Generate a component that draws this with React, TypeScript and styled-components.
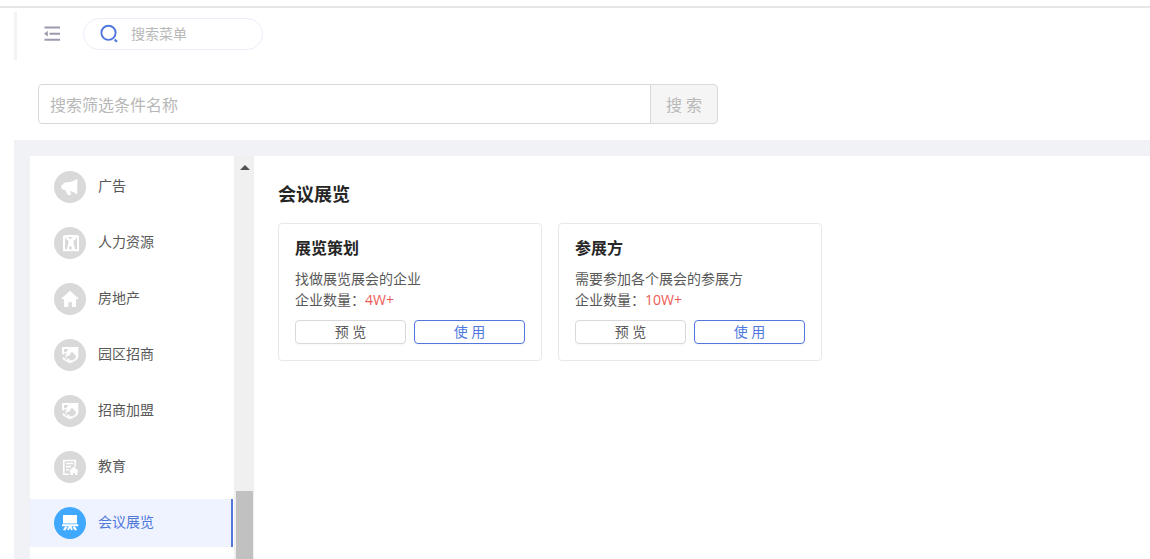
import React from "react";
import styled, { createGlobalStyle } from "styled-components";

const Global = createGlobalStyle`
  * { box-sizing: border-box; }
  body {
    margin: 0;
    background: #fff;
    color: #595959;
    font-family: "Open Sans", "Noto Sans CJK SC", sans-serif;
    font-size: 14px;
    overflow: hidden;
  }
  button, input { font-family: inherit; }
  h1, h2, p, ul { margin: 0; padding: 0; }
`;

const Page = styled.div`
  display: flex;
  flex-direction: column;
  height: 100vh;
  padding: 6px 0 0 14px;
`;

const TopRule = styled.div`
  height: 2px;
  margin-left: -14px;
  flex: none;
  background: #e6e6e6;
`;

const Header = styled.header`
  display: flex;
  align-items: center;
  gap: 22px;
  flex: none;
  height: 48px;
  margin-top: 4px;
  padding: 0 24px 4px 26px;
  border-left: 3px solid #f3f3f3;
`;

const IconButton = styled.button`
  display: flex;
  padding: 0;
  border: 0;
  background: none;
  color: #9c9aad;
  cursor: pointer;
`;

const MenuSearch = styled.label`
  display: flex;
  align-items: center;
  gap: 12px;
  width: 180px;
  height: 32px;
  padding: 0 16px;
  border: 1px solid #ebeef8;
  border-radius: 16px;
  svg { flex: none; }
`;

const MenuInput = styled.input`
  min-width: 0;
  flex: 1;
  padding: 0 0 2px;
  border: 0;
  outline: 0;
  background: none;
  font-size: 14px;
  &::placeholder { color: #b8b8b8; }
`;

const FilterForm = styled.form`
  display: flex;
  flex: none;
  padding: 24px 24px 16px;
`;

const FilterInput = styled.input`
  width: 613px;
  min-width: 0;
  height: 40px;
  padding: 2px 11px 0;
  border: 1px solid #d9d9d9;
  border-radius: 4px 0 0 4px;
  outline: 0;
  font-size: 16px;
  &::placeholder { color: #b8b8b8; }
`;

const FilterButton = styled.button`
  width: 68px;
  height: 40px;
  margin-left: -1px;
  padding: 0;
  border: 1px solid #d9d9d9;
  border-radius: 0 4px 4px 0;
  background: #f5f5f5;
  color: #b8b8b8;
  font-size: 16px;
`;

const Body = styled.div`
  display: flex;
  flex: 1;
  min-height: 0;
  padding: 16px 0 0 16px;
  background: #f0f2f5;
`;

const Sidebar = styled.nav`
  width: 204px;
  flex: none;
  padding: 7px 1px 0 0;
  background: #fff;
  overflow: hidden;
`;

const NavList = styled.ul`
  display: flex;
  flex-direction: column;
  gap: 8px;
  list-style: none;
`;

const NavLink = styled.a<{ $active?: boolean }>`
  display: flex;
  align-items: center;
  gap: 12px;
  height: 48px;
  padding-left: 24px;
  border-right: 2px solid ${(p) => (p.$active ? "#5078dc" : "transparent")};
  background: ${(p) => (p.$active ? "#eef3ff" : "transparent")};
  color: ${(p) => (p.$active ? "#5078dc" : "#595959")};
  text-decoration: none;
`;

const NavText = styled.span`
  padding-bottom: 2px;
  line-height: 20px;
`;

const Badge = styled.span<{ $active?: boolean }>`
  display: flex;
  width: 32px;
  height: 32px;
  border-radius: 50%;
  background: ${(p) => (p.$active ? "#40a9ff" : "#d9d9d9")};
  color: ${(p) => (p.$active ? "#40a9ff" : "#d9d9d9")};
`;

const Track = styled.div`
  display: flex;
  flex-direction: column;
  width: 20px;
  flex: none;
  padding: 9px 1px 0 2px;
  background: #f0f0f0;
`;

const ArrowUp = styled.div`
  align-self: center;
  border: 5px solid transparent;
  border-top: 0;
  border-bottom-color: #505050;
`;

const Thumb = styled.div`
  flex: 1;
  margin-top: 321px;
  background: #c1c1c1;
`;

const Main = styled.main`
  flex: 1;
  min-width: 0;
  padding: 24px;
  background: #fff;
`;

const Title = styled.h1`
  color: #262626;
  font-size: 18px;
  line-height: 28px;
`;

const Cards = styled.div`
  display: flex;
  flex-wrap: wrap;
  gap: 16px;
  margin-top: 15px;
`;

const Card = styled.article`
  width: 264px;
  padding: 12px 16px 16px;
  border: 1px solid #e8e8e8;
  border-radius: 4px;
`;

const CardTitle = styled.h2`
  margin-bottom: 8px;
  color: #262626;
  font-size: 16px;
  line-height: 24px;
`;

const Line = styled.p`
  line-height: 21px;
`;

const Count = styled.span`
  color: #ec5b56;
`;

const Actions = styled.div`
  display: flex;
  gap: 8px;
  margin-top: 10px;
`;

const Button = styled.button<{ $primary?: boolean }>`
  flex: 1;
  height: 24px;
  padding: 0 0 1px;
  border: 1px solid ${(p) => (p.$primary ? "#5078dc" : "#d9d9d9")};
  border-radius: 4px;
  background: #fff;
  color: ${(p) => (p.$primary ? "#5078dc" : "#595959")};
  font-size: 14px;
  line-height: 20px;
  box-shadow: 0 2px 0 rgba(0, 0, 0, 0.02);
  cursor: pointer;
`;

const Glyph = ({ children }: { children: React.ReactNode }) => (
  <svg width="32" height="32" viewBox="0 0 32 32" fill="#fff" aria-hidden="true">
    {children}
  </svg>
);

const Horn = () => (
  <Glyph>
    <path d="M23.300 7.800v15.800c-2.400-1.900-4.600-3-7.400-3.500l1.300 4h-3.300l-2.800-5.200c-1 .2-1.700 0-2.100-.6-1.400-.2-1.900-1.200-1.700-2.500-.4-1 .1-1.900 1.200-2 .7-1.600 2.200-2.500 4.300-2.600 4-.1 7.400-1.100 10.500-3.400z" />
  </Glyph>
);

const Suit = () => (
  <Glyph>
    <path d="M10.500 8h13v.8H25v15.500H9V8.800h1.500z" />
    <path fill="currentColor" d="M13.800 10h5l-2.500 2.200zM11 10.800h1.200v1.700l2.500 1.300-.5 3.200-1.200 5.300h-2zM23 10.800h-1.200v1.700l-2.500 1.300.5 3.200 1.200 5.300h2zM15.200 20.200l1.200-1.500 1.200 1.500v2.200h-2.400z" />
  </Glyph>
);

const House = () => (
  <Glyph>
    <path d="M16 7.700l8.600 7.700-.6.900h-2V24h-4v-4.700h-3.600V24H10v-7.700H8l-.6-.9z" />
  </Glyph>
);

const Handshake = () => (
  <Glyph>
    <path d="M8 8h16.300v9.500c0 3.300-4.600 5.300-8.100 6.800C12.700 22.800 8 20.800 8 17.500z" />
    <path fill="currentColor" d="M10 10h4.200l-1.500 2.500-2.700 1zM7.500 15.200h2.500l2-1.500 1 .6-1.700 2 .8 1.500-1.800.8H7.500z" />
    <path fill="currentColor" d="M17 13.300l2.200.2 3.200 4.300-1 1.200-.6 1.500-1.400-.2-.7 1.400-1.400-.7-1 .6-1.400-1.800-1.900.3-1.400-1.800 3-2 .8.600z" />
    <path stroke="currentColor" strokeWidth="1" fill="none" d="M10 18l3.500 3.200" />
  </Glyph>
);

const Report = () => (
  <Glyph>
    <path fill="none" stroke="#fff" strokeWidth="1.600" d="M15 23.200H9.800V9.500h11.400v6M12 12.500h7M12 15.600h5M12 18.700h3" />
    <path d="M19.800 15.600l4.700 4.300-.4.700h-.7v3.400h-2.500v-2h-2v2h-2.500v-3.400h-.8l-.4-.7z" />
  </Glyph>
);

const Board = () => (
  <Glyph>
    <path d="M9 8h14v8.500H9zM8 17.300h16.300v2H8zM11.200 19.300l2.300.9-2.300 3.300-2.200-.4zM20.900 19.300l-2.300.9 2.300 3.300 2.200-.4zM14.700 19.300h2.700l1.500 3.500-1.700.4-1.200-2.300-1.200 2.300-1.700-.4z" />
  </Glyph>
);

const categories = [
  { name: "广告", Icon: Horn },
  { name: "人力资源", Icon: Suit },
  { name: "房地产", Icon: House },
  { name: "园区招商", Icon: Handshake },
  { name: "招商加盟", Icon: Handshake },
  { name: "教育", Icon: Report },
  { name: "会议展览", Icon: Board, active: true },
];

const templates = [
  { title: "展览策划", desc: "找做展览展会的企业", count: "4W+" },
  { title: "参展方", desc: "需要参加各个展会的参展方", count: "10W+" },
];

export default function App() {
  return (
    <>
      <Global />
      <Page>
        <TopRule />
        <Header>
          <IconButton type="button" aria-label="收起菜单">
            <svg width="18" height="18" viewBox="0 0 18 18" fill="currentColor">
              <path d="M1.500 1.600h15.500v2H1.500zM6.500 7.700h10.500v2H6.500zM1.500 13.800h15.500v2H1.500zM1 8.700l3.800-2.900v5.800z" />
            </svg>
          </IconButton>
          <MenuSearch>
            <svg width="19" height="20" viewBox="0 0 19 20" fill="none" stroke="#5078dc" strokeWidth="1.900">
              <circle cx="8.500" cy="8.800" r="7.100" />
              <path strokeWidth="2.200" d="M14.600 15.500l2.400 2.200" />
            </svg>
            <MenuInput aria-label="搜索菜单" placeholder="搜索菜单" />
          </MenuSearch>
        </Header>
        <FilterForm onSubmit={(e) => e.preventDefault()}>
          <FilterInput aria-label="搜索筛选条件名称" placeholder="搜索筛选条件名称" />
          <FilterButton disabled>搜 索</FilterButton>
        </FilterForm>
        <Body>
          <Sidebar>
            <NavList>
              {categories.map(({ name, Icon, active }) => (
                <li key={name}>
                  <NavLink href="#" $active={active}>
                    <Badge $active={active}>
                      <Icon />
                    </Badge>
                    <NavText>{name}</NavText>
                  </NavLink>
                </li>
              ))}
            </NavList>
          </Sidebar>
          <Track aria-hidden="true">
            <ArrowUp />
            <Thumb />
          </Track>
          <Main>
            <Title>会议展览</Title>
            <Cards>
              {templates.map((t) => (
                <Card key={t.title}>
                  <CardTitle>{t.title}</CardTitle>
                  <Line>{t.desc}</Line>
                  <Line>
                    企业数量：<Count>{t.count}</Count>
                  </Line>
                  <Actions>
                    <Button type="button">预 览</Button>
                    <Button type="button" $primary>使 用</Button>
                  </Actions>
                </Card>
              ))}
            </Cards>
          </Main>
        </Body>
      </Page>
    </>
  );
}
